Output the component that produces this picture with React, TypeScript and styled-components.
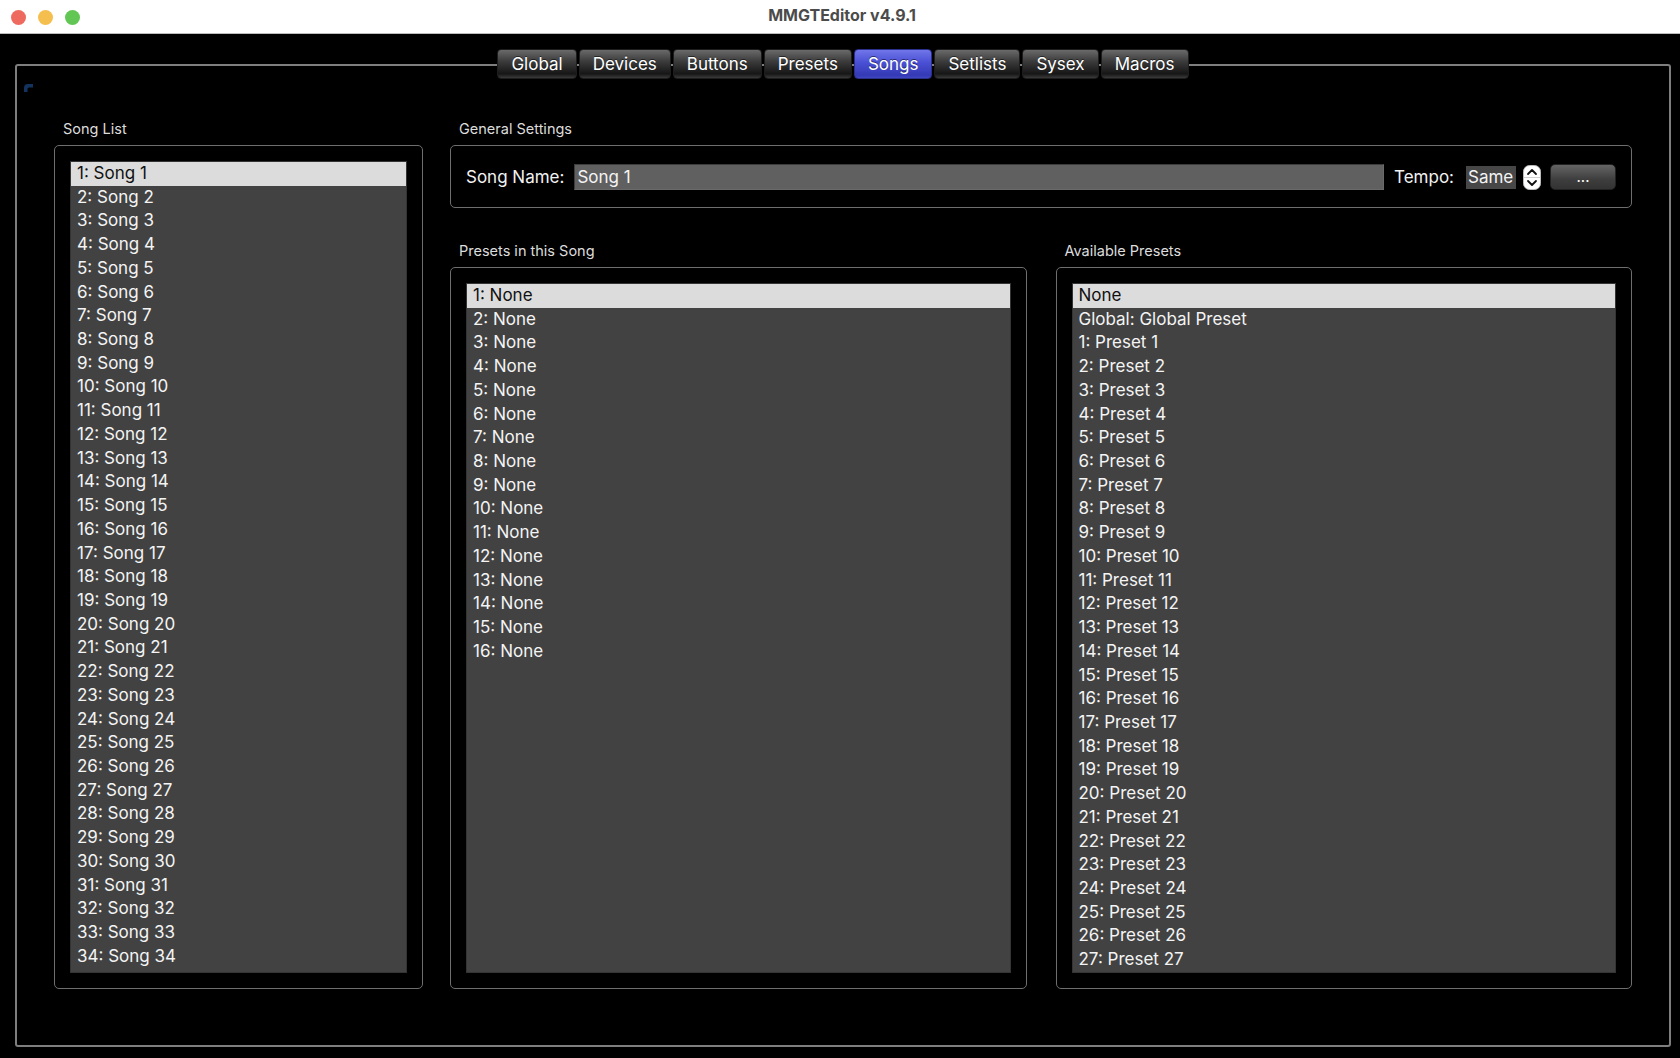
import { createGlobalStyle } from "styled-components";
import styled from "styled-components";

const GlobalStyle = createGlobalStyle`
    html, body {
        margin: 0;
        padding: 0;
        background: #000;
    }
    body {
        font-family: Inter, "Liberation Sans", sans-serif;
        -webkit-font-smoothing: antialiased;
    }
`;

const Window = styled.div`
    width: 1680px;
    height: 1058px;
    display: flex;
    flex-direction: column;
    background: #000;
    overflow: hidden;
`;

const TitleBar = styled.div`
    height: 33px;
    flex: none;
    background: #fff;
    border-bottom: 1px solid #bdbdbd;
    display: grid;
    grid-template-columns: 1fr auto 1fr;
    align-items: center;
`;

const Lights = styled.div`
    display: flex;
    gap: 12px;
    padding-left: 11px;
    padding-top: 1px;
`;

const Light = styled.span<{ $color: string }>`
    width: 15px;
    height: 15px;
    border-radius: 50%;
    background: ${(p) => p.$color};
`;

const Title = styled.div`
    font-size: 16px;
    font-weight: 700;
    color: #4b4b4b;
    padding-left: 4px;
    padding-bottom: 3px;
`;

const Body = styled.div`
    flex: 1;
    min-height: 0;
    display: flex;
    flex-direction: column;
    padding: 15px 9px 11px 15px;
`;

const TabBar = styled.div`
    display: flex;
    justify-content: center;
    gap: 2px;
    position: relative;
    z-index: 1;
`;

const Tab = styled.div<{ $active?: boolean }>`
    height: 30px;
    padding: 0 13px;
    box-sizing: border-box;
    display: flex;
    align-items: center;
    font-size: 17px;
    color: #fff;
    border-radius: 4px;
    border: 1px solid ${(p) => (p.$active ? "#2a2f8a" : "#1d1d1d")};
    background: ${(p) =>
        p.$active
            ? "linear-gradient(#7176ea 0%, #4a50d4 45%, #343ab5 90%, #4046c0 100%)"
            : "linear-gradient(#6a6a6a 0%, #3c3c3c 40%, #161616 85%, #3a3a3a 100%)"};
    text-shadow: 0 -1px 0 rgba(0, 0, 0, 0.5);
`;

const Frame = styled.div`
    flex: 1;
    min-height: 0;
    margin-top: -15px;
    border: 2px solid #7e7e7e;
    border-radius: 3px;
    display: flex;
    flex-direction: column;
`;

const FocusMark = styled.svg`
    margin: 18px 0 0 7px;
    flex: none;
`;

const Content = styled.div`
    flex: 1;
    min-height: 0;
    display: grid;
    grid-template-columns: 369px 1fr;
    grid-template-rows: minmax(0, 1fr);
    column-gap: 27px;
    padding: 29px 37px 56px 37px;
`;

const Column = styled.div`
    display: flex;
    flex-direction: column;
    min-height: 0;
`;

const GroupLabel = styled.div<{ $gap?: number }>`
    font-size: 14.5px;
    line-height: 16px;
    color: #dcdcdc;
    padding-left: 9px;
    margin-top: ${(p) => p.$gap ?? 0}px;
    margin-bottom: 8px;
`;

const GroupBox = styled.div<{ $grow?: boolean }>`
    border: 1px solid #6e6e6e;
    border-radius: 5px;
    padding: 15px;
    display: flex;
    flex-direction: column;
    min-height: 0;
    ${(p) => (p.$grow ? "flex: 1;" : "")}
`;

const SettingsRow = styled.div`
    display: flex;
    align-items: center;
    height: 30px;
    margin: 1px 0 -15px 0;
    padding-bottom: 15px;
    font-size: 17px;
    color: #f2f2f2;
`;

const FieldLabel = styled.span<{ $gap: number }>`
    margin-right: ${(p) => p.$gap}px;
    white-space: nowrap;
`;

const TextInput = styled.div`
    flex: 1;
    height: 26px;
    box-sizing: border-box;
    background: #606060;
    border: 1px solid #3c3c3c;
    border-bottom-color: #6a6a6a;
    border-right-color: #6a6a6a;
    padding-left: 2px;
    display: flex;
    align-items: center;
    margin-right: 10px;
    color: #f4f4f4;
`;

const ValueBox = styled.div`
    height: 23px;
    width: 50px;
    box-sizing: border-box;
    background: #474747;
    display: flex;
    align-items: center;
    padding-left: 2px;
    color: #f4f4f4;
    margin-right: 7px;
`;

const Spinner = styled.svg`
    margin-right: 9px;
    flex: none;
`;

const DotsButton = styled.div`
    width: 66px;
    height: 26px;
    box-sizing: border-box;
    border: 1px solid #222;
    border-radius: 5px;
    background: linear-gradient(#656565, #3e3e3e 60%, #333);
    display: flex;
    align-items: center;
    justify-content: center;
    font-size: 15px;
    color: #fff;
    padding-bottom: 2px;
`;

const Panels = styled.div`
    flex: 1;
    display: grid;
    grid-template-columns: 1fr 1fr;
    grid-template-rows: minmax(0, 1fr);
    column-gap: 29px;
    min-height: 0;
`;

const ListBox = styled.div`
    flex: 1;
    background: #424242;
    border: 1px solid #343434;
    overflow: hidden;
    min-height: 0;
`;

const Row = styled.div<{ $selected?: boolean }>`
    height: 23.73px;
    line-height: 23.73px;
    padding-left: 6px;
    font-size: 17px;
    white-space: nowrap;
    color: ${(p) => (p.$selected ? "#111" : "#f4f4f4")};
    background: ${(p) => (p.$selected ? "#dcdcdc" : "transparent")};
`;

const tabs = ["Global", "Devices", "Buttons", "Presets", "Songs", "Setlists", "Sysex", "Macros"];

const songs = Array.from({ length: 34 }, (_, i) => `${i + 1}: Song ${i + 1}`);
const slots = Array.from({ length: 16 }, (_, i) => `${i + 1}: None`);
const available = [
    "None",
    "Global: Global Preset",
    ...Array.from({ length: 27 }, (_, i) => `${i + 1}: Preset ${i + 1}`),
];

function List({ items }: { items: string[] }) {
    return (
        <ListBox>
            {items.map((item, i) => (
                <Row key={item} $selected={i === 0}>
                    {item}
                </Row>
            ))}
        </ListBox>
    );
}

export default function App() {
    return (
        <>
            <GlobalStyle />
            <Window>
                <TitleBar>
                    <Lights>
                        <Light $color="#ee6a5f" />
                        <Light $color="#f5bf4f" />
                        <Light $color="#62c655" />
                    </Lights>
                    <Title>MMGTEditor v4.9.1</Title>
                    <div />
                </TitleBar>
                <Body>
                    <TabBar>
                        {tabs.map((t) => (
                            <Tab key={t} $active={t === "Songs"}>
                                {t}
                            </Tab>
                        ))}
                    </TabBar>
                    <Frame>
                        <FocusMark width="9" height="8" viewBox="0 0 9 8">
                            <path d="M0 8V4Q0 0 4 0H9V3.5H5Q3.5 3.5 3.5 5V8Z" fill="#13335f" />
                        </FocusMark>
                        <Content>
                            <Column>
                                <GroupLabel>Song List</GroupLabel>
                                <GroupBox $grow>
                                    <List items={songs} />
                                </GroupBox>
                            </Column>
                            <Column>
                                <GroupLabel>General Settings</GroupLabel>
                                <GroupBox>
                                    <SettingsRow>
                                        <FieldLabel $gap={10}>Song Name:</FieldLabel>
                                        <TextInput>Song 1</TextInput>
                                        <FieldLabel $gap={12}>Tempo:</FieldLabel>
                                        <ValueBox>Same</ValueBox>
                                        <Spinner width="18" height="25" viewBox="0 0 18 25">
                                            <rect x="0.5" y="0.5" width="17" height="24" rx="6" fill="#fff" stroke="#bbb" />
                                            <line x1="1" y1="12.5" x2="17" y2="12.5" stroke="#d0d0d0" />
                                            <path d="M5 9L9 5L13 9" fill="none" stroke="#111" strokeWidth="1.8" strokeLinecap="round" strokeLinejoin="round" />
                                            <path d="M5 16L9 20L13 16" fill="none" stroke="#111" strokeWidth="1.8" strokeLinecap="round" strokeLinejoin="round" />
                                        </Spinner>
                                        <DotsButton>...</DotsButton>
                                    </SettingsRow>
                                </GroupBox>
                                <Panels>
                                    <Column>
                                        <GroupLabel $gap={35}>Presets in this Song</GroupLabel>
                                        <GroupBox $grow>
                                            <List items={slots} />
                                        </GroupBox>
                                    </Column>
                                    <Column>
                                        <GroupLabel $gap={35}>Available Presets</GroupLabel>
                                        <GroupBox $grow>
                                            <List items={available} />
                                        </GroupBox>
                                    </Column>
                                </Panels>
                            </Column>
                        </Content>
                    </Frame>
                </Body>
            </Window>
        </>
    );
}
